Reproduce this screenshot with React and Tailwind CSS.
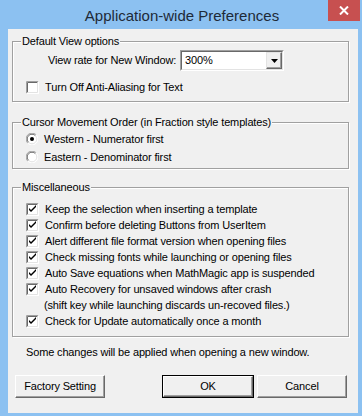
import React from "react";

const font = { fontFamily: '"Liberation Sans", Arial, sans-serif' };

function Check({ checked }) {
  return (
    <svg width="13" height="13" viewBox="0 0 13 13" className="shrink-0">
      <rect x="0" y="0" width="13" height="13" fill="#ffffff" />
      <path d="M0.5 12.5 V0.5 H12.5" stroke="#a0a0a0" fill="none" />
      <path d="M1.5 11.5 V1.5 H11.5" stroke="#696969" fill="none" />
      <path d="M0.5 12.5 H12.5 V0.5" stroke="#ffffff" fill="none" />
      <path d="M1.5 11.5 H11.5 V1.5" stroke="#e3e3e3" fill="none" />
      {checked && (
        <path d="M3 5 L3 7 L5 9 L10 4 L10 2 L5 7 Z" fill="#000" />
      )}
    </svg>
  );
}

function Radio({ checked }) {
  return (
    <svg width="12" height="12" viewBox="0 0 12 12" className="shrink-0">
      <circle cx="6" cy="6" r="5.5" fill="#ffffff" />
      <path d="M1.8 10.2 A5.5 5.5 0 0 1 10.2 1.8" stroke="#a0a0a0" fill="none" />
      <path d="M2.6 9.4 A4.5 4.5 0 0 1 9.4 2.6" stroke="#696969" fill="none" />
      <path d="M10.2 1.8 A5.5 5.5 0 0 1 1.8 10.2" stroke="#ffffff" fill="none" />
      <path d="M9.4 2.6 A4.5 4.5 0 0 1 2.6 9.4" stroke="#e3e3e3" fill="none" />
      {checked && <circle cx="6" cy="6" r="2" fill="#000" />}
    </svg>
  );
}

function Group({ title, children, className }) {
  return (
    <div
      className={
        "relative ml-[4px] w-[337px] border border-[#a0a0a0] shadow-[inset_1px_1px_0_#ffffff,1px_1px_0_#ffffff] " +
        className
      }
    >
      <span className="absolute left-[8px] top-[-8px] bg-[#f0f0f0] px-px text-[11px] leading-[14px] text-black">
        {title}
      </span>
      {children}
    </div>
  );
}

function CheckRow({ label, checked = true }) {
  return (
    <div className="flex h-[16px] items-center gap-[6px] pl-[13px]">
      <Check checked={checked} />
      <span className="text-[11px] leading-[14px] text-black whitespace-nowrap">{label}</span>
    </div>
  );
}

function Button({ children, def, className }) {
  return (
    <div
      className={
        "flex h-[23px] items-center justify-center text-[11px] text-black " +
        (def ? "border border-black " : "") +
        className
      }
    >
      <div className="flex h-full w-full items-center justify-center border border-t-white border-l-white border-r-[#696969] border-b-[#696969] bg-[#f0f0f0] shadow-[inset_-1px_-1px_0_#a0a0a0]">
        {children}
      </div>
    </div>
  );
}

export default function App() {
  return (
    <div
      className="flex h-[416px] w-[362px] flex-col overflow-hidden bg-[#8cc1f1] tracking-[-0.15px]"
      style={font}
    >
      <div className="relative flex h-[29px] shrink-0 items-center justify-center">
        <span className="text-[15px] leading-none tracking-normal text-[#1e2a38] translate-x-[1px] translate-y-[1px]">
          Application-wide Preferences
        </span>
        <div className="absolute right-[2px] top-0 flex h-[21px] w-[32px] items-center justify-center bg-[#c75050]">
          <svg width="10" height="9" viewBox="0 0 10 9">
            <path d="M1 0.5 L9 8.5 M9 0.5 L1 8.5" stroke="#ffffff" strokeWidth="2" />
          </svg>
        </div>
      </div>
      <div className="ml-[8px] h-[384px] w-[350px] bg-[#f0f0f0] pt-[12px]">
        <Group title="Default View options" className="h-[61px]">
          <div className="mt-[8px] flex h-[21px] items-center pl-[35px]">
            <span className="w-[132px] text-[11px] text-black whitespace-nowrap">View rate for New Window:</span>
            <div className="flex h-[21px] w-[104px] items-stretch border border-t-[#a0a0a0] border-l-[#a0a0a0] border-r-white border-b-white">
              <div className="flex flex-1 items-stretch border border-t-[#696969] border-l-[#696969] border-r-[#e3e3e3] border-b-[#e3e3e3] bg-white">
                <span className="flex flex-1 items-center pl-[3px] text-[11px] text-black">300%</span>
                <div className="flex w-[16px] items-center justify-center border border-t-[#e3e3e3] border-l-[#e3e3e3] border-r-[#696969] border-b-[#696969] bg-[#f0f0f0] shadow-[inset_-1px_-1px_0_#a0a0a0]">
                  <svg width="7" height="4" viewBox="0 0 7 4">
                    <path d="M0 0 H7 L3.5 4 Z" fill="#000" />
                  </svg>
                </div>
              </div>
            </div>
          </div>
          <div className="mt-[8px]">
            <CheckRow label="Turn Off Anti-Aliasing for Text" checked={false} />
          </div>
        </Group>
        <Group title="Cursor Movement Order (in Fraction style templates)" className="mt-[20px] h-[47px]">
          <div className="mt-[7px] flex h-[18px] items-center gap-[6px] pl-[13px]">
            <Radio checked />
            <span className="text-[11px] text-black">Western - Numerator first</span>
          </div>
          <div className="flex h-[18px] items-center gap-[6px] pl-[13px]">
            <Radio />
            <span className="text-[11px] text-black">Eastern - Denominator first</span>
          </div>
        </Group>
        <Group title="Miscellaneous" className="mt-[18px] h-[150px]">
          <div className="mt-[13px] flex flex-col">
            <CheckRow label="Keep the selection when inserting a template" />
            <CheckRow label="Confirm before deleting Buttons from UserItem" />
            <CheckRow label="Alert different file format version when opening files" />
            <CheckRow label="Check missing fonts while launching or opening files" />
            <CheckRow label="Auto Save equations when MathMagic app is suspended" />
            <CheckRow label="Auto Recovery for unsaved windows after crash" />
            <div className="flex h-[16px] items-center pl-[31px] text-[11px] text-black whitespace-nowrap">
              (shift key while launching discards un-recoved files.)
            </div>
            <CheckRow label="Check for Update automatically once a month" />
          </div>
        </Group>
        <div className="mt-[8px] flex h-[14px] items-center pl-[18px] text-[11px] text-black">
          Some changes will be applied when opening a new window.
        </div>
        <div className="mt-[16px] flex h-[23px] items-center">
          <Button className="ml-[7px] w-[90px]">Factory Setting</Button>
          <Button def className="ml-[57px] w-[92px]">OK</Button>
          <Button className="ml-[3px] w-[90px]">Cancel</Button>
        </div>
      </div>
    </div>
  );
}
